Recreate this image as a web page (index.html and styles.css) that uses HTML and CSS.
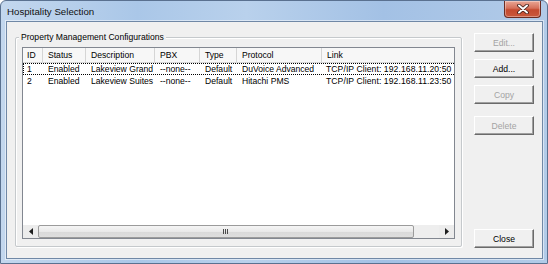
FILE: index.html
```html
<!DOCTYPE html>
<html lang="en">

<head>
  <meta charset="UTF-8" />
  <meta name="viewport" content="width=device-width, initial-scale=1.0" />
  <title>Hospitality Selection</title>
  <link rel="stylesheet" href="styles.css">
</head>

<body>
  <div class="window">
    <div class="titlebar">
      <span class="title">Hospitality Selection</span>
      <span class="close-box">
        <svg width="12" height="10" viewBox="0 0 12 10">
          <path d="M2 1.5 L10 8.5 M10 1.5 L2 8.5" stroke="#3b1a16" stroke-width="3.6" stroke-linecap="round" fill="none" />
          <path d="M2 1.5 L10 8.5 M10 1.5 L2 8.5" stroke="#ffffff" stroke-width="2" stroke-linecap="round" fill="none" />
        </svg>
      </span>
    </div>

    <div class="client">
      <div class="group">
        <div class="group-title">Property Management Configurations</div>
        <div class="listview">
          <div class="lv-view">
            <div class="lv-head">
              <span>ID</span>
              <span>Status</span>
              <span>Description</span>
              <span>PBX</span>
              <span>Type</span>
              <span>Protocol</span>
              <span>Link</span>
            </div>
            <div class="lv-row focused">
              <span>1</span>
              <span>Enabled</span>
              <span>Lakeview Grand</span>
              <span>--none--</span>
              <span>Default</span>
              <span>DuVoice Advanced</span>
              <span class="link">TCP/IP Client: 192.168.11.20:50</span>
            </div>
            <div class="lv-row">
              <span>2</span>
              <span>Enabled</span>
              <span>Lakeview Suites</span>
              <span>--none--</span>
              <span>Default</span>
              <span>Hitachi PMS</span>
              <span class="link">TCP/IP Client: 192.168.11.23:50</span>
            </div>
          </div>
          <div class="hscroll">
            <span class="sb-btn">
              <svg width="4" height="7" viewBox="0 0 4 7"><path d="M4 0 L0 3.5 L4 7 Z" fill="#1e1e1e" /></svg>
            </span>
            <span class="sb-thumb"><span class="grip"></span></span>
            <span class="sb-track"></span>
            <span class="sb-btn">
              <svg width="4" height="7" viewBox="0 0 4 7"><path d="M0 0 L4 3.5 L0 7 Z" fill="#1e1e1e" /></svg>
            </span>
          </div>
        </div>
      </div>

      <div class="actions">
        <button class="btn" disabled>Edit...</button>
        <button class="btn">Add...</button>
        <button class="btn" disabled>Copy</button>
        <button class="btn delete" disabled>Delete</button>
        <button class="btn close">Close</button>
      </div>
    </div>
  </div>
</body>

</html>
```

FILE: styles.css
```css
* {
  box-sizing: border-box;
}

body {
  margin: 0;
  background: #ffffff;
  font-family: "Liberation Sans", Arial, sans-serif;
  font-size: 8.6px;
  color: #000;
}

.window {
  width: 548px;
  height: 264px;
  display: flex;
  flex-direction: column;
  padding: 0 4px 4px 5px;
  border: 1px solid #5a7190;
  border-radius: 6px 6px 0 0;
  background: linear-gradient(to right, #c3d7ee 0%, #aac7e8 25%, #b9d1ec 45%, #a3c1e5 70%, #b2cbe8 100%);
}

.titlebar {
  height: 20px;
  display: flex;
  justify-content: space-between;
  align-items: flex-start;
}

.title {
  margin: 5px 0 0 1px;
  font-size: 9.7px;
  line-height: 11px;
  color: #111;
}

.close-box {
  width: 37px;
  height: 17px;
  margin-right: 2px;
  display: flex;
  justify-content: center;
  align-items: center;
  border: 1px solid #6b2c22;
  border-top: 0;
  border-radius: 0 0 4px 4px;
  background: linear-gradient(#e9a796 0%, #d5705a 45%, #c44a2f 55%, #c9583c 100%);
  box-shadow: inset 0 0 0 1px rgba(255, 255, 255, 0.35);
}

.client {
  flex: 1;
  display: flex;
  padding: 11px 8px 10px 8px;
  background: #f0f0f0;
  border: 1px solid #7088a6;
  box-shadow: 0 0 0 1px rgba(255, 255, 255, 0.5);
}

.group {
  width: 447px;
  margin: 4px 0 1px 0;
  padding: 0 6px 7px 6px;
  display: flex;
  flex-direction: column;
  border: 1px solid #c5c9cc;
  border-radius: 2px;
  box-shadow: inset 1px 1px 0 #ffffff, 1px 1px 0 #ffffff;
}

.group-title {
  width: fit-content;
  height: 11px;
  margin: -6px 0 4px -3px;
  padding: 0 2px;
  line-height: 11px;
  background: #f0f0f0;
}

.listview {
  flex: 1;
  display: flex;
  flex-direction: column;
  background: #ffffff;
  border: 1px solid #828790;
}

.lv-view {
  flex: 1;
  overflow: hidden;
}

.lv-head,
.lv-row {
  display: grid;
  grid-template-columns: 20px 43px 69px 45px 37px 85px 150px;
  width: max-content;
  white-space: nowrap;
}

.lv-head {
  height: 15px;
  line-height: 14px;
  background: #f7f7f7;
  border-bottom: 1px solid #d5d5d5;
}

.lv-head span {
  padding-left: 5px;
  border-right: 1px solid #d5d5d5;
  overflow: hidden;
}

.lv-head span:first-child {
  padding-left: 4px;
}

.lv-row {
  height: 12px;
  line-height: 12px;
}

.lv-row span {
  padding-left: 5px;
}

.lv-row span:first-child {
  padding-left: 4px;
}

.lv-row .link {
  padding-left: 4px;
  letter-spacing: 0.08px;
}

.lv-row.focused {
  outline: 1px dotted #000;
  outline-offset: -1px;
}

.hscroll {
  height: 13px;
  display: flex;
  background: #eeeeee;
}

.sb-btn {
  width: 15px;
  display: flex;
  justify-content: center;
  align-items: center;
  background: #ececec;
}

.sb-thumb {
  width: 376px;
  display: flex;
  justify-content: center;
  align-items: center;
  border: 1px solid #9b9b9b;
  border-radius: 2px;
  background: linear-gradient(#f5f5f5 0%, #e9e9e9 50%, #d9d9d9 51%, #dedede 100%);
}

.grip {
  width: 6px;
  height: 5px;
  background: repeating-linear-gradient(to right, #4a4a4a 0 1px, transparent 1px 2px);
}

.sb-track {
  flex: 1;
}

.actions {
  width: 60px;
  margin-left: 12px;
  display: flex;
  flex-direction: column;
  gap: 7px;
}

.btn {
  height: 19px;
  padding: 0;
  font-family: inherit;
  font-size: 8.6px;
  color: #000;
  background: #f0f0f0;
  border: 1px solid;
  border-color: #ffffff #6a6a6a #6a6a6a #ffffff;
  box-shadow: inset -1px -1px 0 #a0a0a0;
}

.btn:disabled {
  color: #a3a3a3;
}

.btn.delete {
  margin-top: 5px;
}

.btn.close {
  margin-top: auto;
}
```
